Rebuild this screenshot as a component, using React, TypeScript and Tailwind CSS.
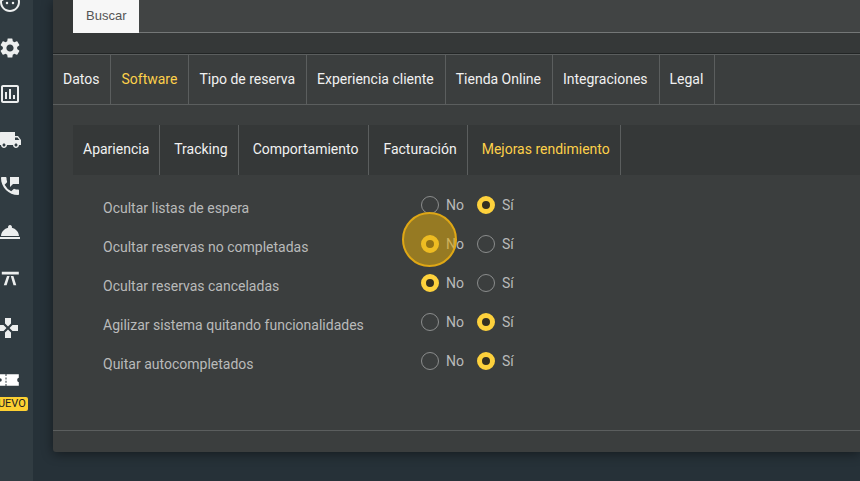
import React from "react";
import {
  MdFace,
  MdGamepad,
  MdLocalShipping,
  MdOutlineAssessment,
  MdPermPhoneMsg,
  MdRoomService,
  MdSettings,
} from "react-icons/md";
import clsx from "clsx";

const TableIcon = () => (
  <svg viewBox="0 0 24 24" className="size-6" fill="currentColor">
    <path d="M3.800 5.800h17v2.700h-17zM9 10h2.600L8.600 19.300H5.800zM12.800 10h2.600l2.900 9.300h-2.800z" />
  </svg>
);

const TicketIcon = () => (
  <svg viewBox="0 0 24 24" className="size-6 text-white" fill="currentColor">
    <path
      fillRule="evenodd"
      d="M0 6.200h22.800v3.600a2.300 2.300 0 0 0 0 4.400v3.600H0v-3.600a2.300 2.300 0 0 0 0-4.400zM9.500 6.200v1.900h1V6.200zm0 3.300v2h1v-2zm0 3.200v2h1v-2zm0 3.200v1.900h1v-1.900zM4 10.200v3.600a1.800 1.800 0 0 0 0-3.600z"
    />
  </svg>
);

const menu = [
  { id: 1, title: "Clientes", icon: <MdFace size={24} /> },
  { id: 2, title: "Ajustes", icon: <MdSettings size={24} /> },
  { id: 3, title: "Informes", icon: <MdOutlineAssessment size={24} /> },
  { id: 4, title: "Envíos", icon: <MdLocalShipping size={24} /> },
  { id: 5, title: "Llamadas", icon: <MdPermPhoneMsg size={24} /> },
  { id: 6, title: "Servicio", icon: <MdRoomService size={24} /> },
  { id: 7, title: "Mesas", icon: <TableIcon /> },
];

const extras = [
  { id: 1, title: "Juegos", icon: <MdGamepad size={24} /> },
  { id: 2, title: "Entradas", icon: <TicketIcon />, badge: "NUEVO" },
];

const tabs = [
  "Datos",
  "Software",
  "Tipo de reserva",
  "Experiencia cliente",
  "Tienda Online",
  "Integraciones",
  "Legal",
];

const subTabs = [
  "Apariencia",
  "Tracking",
  "Comportamiento",
  "Facturación",
  "Mejoras rendimiento",
];

const settings = [
  { id: "espera", title: "Ocultar listas de espera", value: "Sí" },
  {
    id: "incompletas",
    title: "Ocultar reservas no completadas",
    value: "No",
    highlight: true,
  },
  { id: "canceladas", title: "Ocultar reservas canceladas", value: "No" },
  {
    id: "agilizar",
    title: "Agilizar sistema quitando funcionalidades",
    value: "Sí",
  },
  { id: "autocompletados", title: "Quitar autocompletados", value: "Sí" },
];

const Sidebar = () => (
  <aside className="w-[33px] shrink-0 overflow-hidden bg-[#313c42] text-[#eceeee]">
    <ul className="-mt-[10px] -ml-[2px] flex w-6 flex-col gap-[22px]">
      {menu.map((item) => (
        <li key={item.id}>
          <a href="#" aria-label={item.title} className="block">
            {item.icon}
          </a>
        </li>
      ))}
    </ul>
    <ul className="mt-[26px] -ml-[11px] flex w-[38px] flex-col gap-7">
      {extras.map((item) => (
        <li key={item.id}>
          <a
            href="#"
            aria-label={item.title}
            className="flex flex-col items-center gap-[5px]"
          >
            {item.icon}
            {item.badge && (
              <span className="rounded-xs bg-[#fdd032] px-[2px] text-[11px] leading-[14px] text-[#222]">
                {item.badge}
              </span>
            )}
          </a>
        </li>
      ))}
    </ul>
  </aside>
);

const App = () => {
  return (
    <div className="flex min-h-screen overflow-hidden bg-[#263138] font-['Roboto',sans-serif] text-[14px]">
      <Sidebar />
      <main className="min-w-0 flex-1 pl-5">
        <div className="rounded-bl-[3px] bg-[#3b3e3e] shadow-[0_2px_12px_rgba(0,0,0,0.45)]">
          <div className="border-b border-[#222525] bg-[#353838] pb-5 pl-5">
            <div className="flex h-[33px] border-b border-[#747777] bg-[#414444]">
              <button className="-mb-px bg-[#f7f7f7] px-[13px] pb-[2px] font-['Liberation_Sans',sans-serif] text-[13px] text-[#555]">
                Buscar
              </button>
            </div>
          </div>

          <nav className="flex h-[51px] border-y border-[#5b5e5e]">
            {tabs.map((tab) => (
              <a
                key={tab}
                href="#"
                className={clsx(
                  "flex items-center border-r border-[#5b5e5e] pr-[11px] pl-[10px] whitespace-nowrap",
                  tab === "Software" ? "text-[#fdd04a]" : "text-[#f1f1f1]"
                )}
              >
                {tab}
              </a>
            ))}
          </nav>

          <nav className="mt-5 ml-5 flex h-[50px] gap-1 bg-[#353838]">
            {subTabs.map((tab) => (
              <a
                key={tab}
                href="#"
                className={clsx(
                  "flex items-center border-r border-[#5b5e5e] px-[10px] pb-[2px] whitespace-nowrap",
                  tab === "Mejoras rendimiento"
                    ? "text-[#fdd04a]"
                    : "text-[#f1f1f1]"
                )}
              >
                {tab}
              </a>
            ))}
          </nav>

          <div className="pt-[10px] pb-[50px] pl-[50px] text-[#b9baba]">
            {settings.map((row) => (
              <fieldset key={row.id} className="flex h-[39px] items-center">
                <legend className="float-left w-[318px] pt-[7px]">
                  {row.title}
                </legend>
                <div className="relative flex gap-[13px]">
                  {["No", "Sí"].map((option) => (
                    <label key={option} className="flex items-center gap-[7px]">
                      <input
                        type="radio"
                        name={row.id}
                        defaultChecked={option === row.value}
                        className="size-[18px] appearance-none rounded-full border border-[#8b8d8d] checked:border-[5px] checked:border-[#fdd13c] checked:bg-[#332f22]"
                      />
                      <span className="pt-px leading-5">{option}</span>
                    </label>
                  ))}
                  {row.highlight && (
                    <span className="pointer-events-none absolute -top-[21px] -left-[19px] size-[55px] rounded-full border-2 border-[#dfa715] bg-[#e2ac0c]/55" />
                  )}
                </div>
              </fieldset>
            ))}
          </div>

          <div className="h-[22px] border-t border-[#5b5e5e]" />
        </div>
      </main>
    </div>
  );
};

export default App;
